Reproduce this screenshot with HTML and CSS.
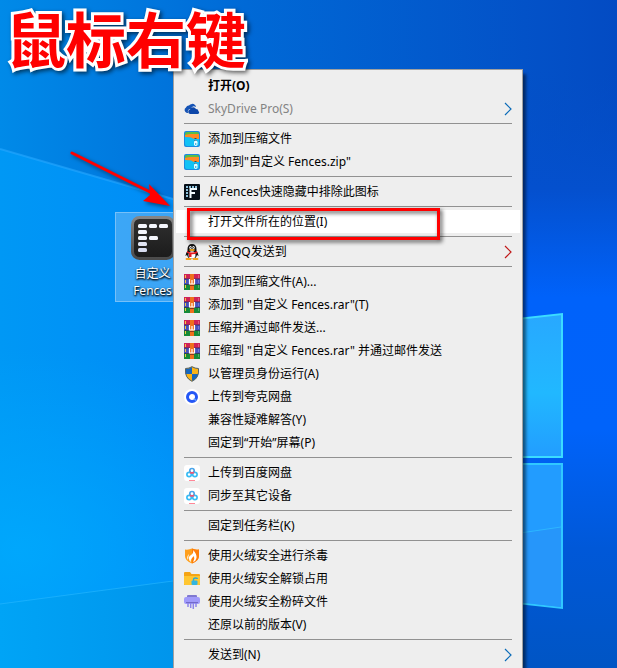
FILE: index.html
```html
<!DOCTYPE html>
<html lang="zh-CN">
<head>
    <meta charset="UTF-8">
    <meta name="viewport" content="width=device-width, initial-scale=1.0">
    <title>鼠标右键</title>
    <link rel="stylesheet" href="styles.css">
</head>
<body>
    <!-- Shared menu icons -->
    <svg class="sprite" aria-hidden="true">
        <symbol id="icon-zip" viewBox="0 0 16 16">
            <rect width="16" height="16" rx="2" fill="#1b8be0"/>
            <path d="M1 5h14v8a2 2 0 0 1-2 2H3a2 2 0 0 1-2-2z" fill="#12c2f5"/>
            <path d="M1 3Q1 1 3 1h10q2 0 2 2v1H1z" fill="#5bbf45"/>
            <path d="M1 4q3-1 6-1h8v5h-4q-2 0-3-1T1 6z" fill="#ff8a24"/>
            <path d="M11.5 7v3" stroke="#20506a" stroke-width="2" stroke-dasharray="1 1"/>
            <rect x="10" y="9.500" width="3.500" height="5.500" rx="1.700" fill="#e9faff"/>
            <circle cx="11.700" cy="13" r=".8" fill="#0794cf"/>
        </symbol>
        <symbol id="icon-rar" viewBox="0 0 16 16">
            <path fill="#cf2257" d="M0 0h16v5H0z"/>
            <path fill="#4650bd" d="M0 5h16v5H0z"/>
            <path fill="#168a38" d="M0 10h16v6H0z"/>
            <path d="M0 5h16M0 10.500h16" stroke="#343060" stroke-width=".8"/>
            <path d="M1.500 1v3m0 2v3m0 2v3" stroke="#f3c941"/>
            <path d="M14.500 1v3m0 2v3m0 2v3" stroke="#fff" opacity=".25"/>
            <path fill="#ef6f1c" d="M6 0h4v16H6z"/>
            <path fill="#8d3a1d" d="M6 11h4v1H6z"/>
            <path d="M5.500 5v5h5V5M8 6v4" fill="none" stroke="#fff" stroke-width="1.200"/>
        </symbol>
        <symbol id="icon-baidu" viewBox="0 0 16 16">
            <rect width="16" height="16" rx="3" fill="#fff"/>
            <circle cx="8" cy="5.700" r="2.200" fill="none" stroke="#4aa5ea" stroke-width="1.700"/>
            <circle cx="5.100" cy="9.500" r="2.200" fill="none" stroke="#39bdf5" stroke-width="1.700"/>
            <circle cx="10.900" cy="9.500" r="2.200" fill="none" stroke="#39bdf5" stroke-width="1.700"/>
            <path d="M6 6.800Q8 9.500 10 6.800M6.500 8.500 8 7.800l1.500.7" fill="none" stroke="#f45472" stroke-width="1.300"/>
            <path d="M5 15.500h6" stroke="#ff8798"/>
        </symbol>
        <symbol id="icon-chevron" viewBox="0 0 8 14">
            <path d="M1 1l6 6-6 6" fill="none" stroke="currentColor" stroke-width="1.2"/>
        </symbol>
    </svg>

    <main class="desktop">
        <svg class="wallpaper" viewBox="0 0 617 668" preserveAspectRatio="none" aria-hidden="true">
            <defs>
                <linearGradient id="sky">
                    <stop offset="0" stop-color="#0098f5"/>
                    <stop offset=".28" stop-color="#008cf7"/>
                    <stop offset=".85" stop-color="#0060e0"/>
                    <stop offset="1" stop-color="#005ae0"/>
                </linearGradient>
                <linearGradient id="topSky">
                    <stop offset="0" stop-color="#008ae8"/>
                    <stop offset=".4" stop-color="#0069d6"/>
                    <stop offset=".85" stop-color="#0352c8"/>
                    <stop offset="1" stop-color="#034bc3"/>
                </linearGradient>
                <linearGradient id="floor">
                    <stop offset="0" stop-color="#00a4f6"/>
                    <stop offset=".28" stop-color="#0095ec"/>
                    <stop offset="1" stop-color="#0050bf"/>
                </linearGradient>
                <linearGradient id="rightSky" x2="0" y2="1">
                    <stop offset="0" stop-color="#034dc6" stop-opacity="0"/>
                    <stop offset=".2" stop-color="#0450ce"/>
                    <stop offset=".38" stop-color="#0062fa"/>
                    <stop offset=".6" stop-color="#0063fa"/>
                    <stop offset=".8" stop-color="#0058d8"/>
                    <stop offset="1" stop-color="#0055c4"/>
                </linearGradient>
                <radialGradient id="glow">
                    <stop offset="0" stop-color="#00aeff" stop-opacity=".7"/>
                    <stop offset="1" stop-color="#00aeff" stop-opacity="0"/>
                </radialGradient>
                <linearGradient id="pane" x2="0" y2="1">
                    <stop offset="0" stop-color="#28a8ff"/>
                    <stop offset=".55" stop-color="#21b8ff"/>
                    <stop offset="1" stop-color="#229dff"/>
                </linearGradient>
            </defs>
            <path fill="url(#sky)" d="M0 0h617v668H0z"/>
            <path fill="url(#topSky)" d="M0 0h617v327L173 199 0 149z"/>
            <ellipse cx="20" cy="550" rx="260" ry="200" fill="url(#glow)"/>
            <path fill="url(#floor)" d="M0 604l617-82v146H0z"/>
            <path fill="url(#rightSky)" d="M500 70h117v598H500z"/>
            <path d="M0 149l173 50" stroke="#28a8ff" stroke-width="2" opacity=".6"/>
            <path d="M0 604l173-23" stroke="#28b8ff" opacity=".6"/>
            <path d="M500 321l62-7v143h-62z" fill="url(#pane)" stroke="#3bdcff" stroke-width="2"/>
            <path d="M500 464h62v144l-62-7z" fill="#229cff" stroke="#30c8ff" stroke-width="2"/>
            <path d="M500 536l61-9v80l-61-7z" fill="#2696fa"/>
            <path d="M500 536l61-9" stroke="#2db6ff"/>
        </svg>

        <h1 class="caption">鼠标右键</h1>

        <button class="shortcut" type="button">
            <svg class="shortcut-icon" viewBox="0 0 44 44" aria-hidden="true">
                <defs>
                    <linearGradient id="tile" x2="0" y2="1">
                        <stop offset="0" stop-color="#303030"/>
                        <stop offset="1" stop-color="#1b1b1b"/>
                    </linearGradient>
                    <linearGradient id="tileEdge" x2="0" y2="1">
                        <stop offset="0" stop-color="#858585"/>
                        <stop offset="1" stop-color="#4b4b4b"/>
                    </linearGradient>
                </defs>
                <rect x="1.5" y="1.5" width="41" height="41" rx="7" fill="url(#tile)" stroke="url(#tileEdge)" stroke-width="3"/>
                <g fill="#f4f6fc">
                    <rect x="7" y="8" width="9" height="4" rx="1.5"/>
                    <rect x="18" y="8" width="8" height="4" rx="1.5"/>
                    <rect x="28" y="8" width="9" height="4" rx="1.5"/>
                    <rect x="7" y="14" width="9" height="4" rx="1.5"/>
                    <rect x="7" y="20" width="9" height="4" rx="1.5"/>
                    <rect x="18" y="20" width="9" height="4" rx="1.5"/>
                    <rect x="7" y="26" width="9" height="4" rx="1.5" fill="#e0e4f2"/>
                    <rect x="7" y="32" width="9" height="4" rx="1.5" fill="#d8ddf0"/>
                </g>
            </svg>
            <span>自定义<br>Fences</span>
        </button>

        <nav class="menu" aria-label="右键菜单">
            <button class="item item-default" type="button"><span class="icon"></span>打开(O)</button>
            <button class="item" type="button" disabled>
                <svg class="icon" viewBox="0 0 16 16"><path d="M3 12a3 3 0 0 1-1-5.5 3 3 0 0 1 3-2A4 4 0 0 1 11 4q1 1 1 2-4-2-5 2-4 0-3 4z" fill="#1553b5"/><path d="M6 13a2.3 2.3 0 0 1 0-4.5A3.3 3.3 0 0 1 12 8a2.5 2.5 0 0 1 2.5 2.3A1.5 1.5 0 0 1 14 13z" fill="#0d47a9"/></svg>
                SkyDrive Pro(S)
                <svg class="chevron"><use href="#icon-chevron"/></svg>
            </button>
            <hr>
            <button class="item" type="button"><svg class="icon"><use href="#icon-zip"/></svg>添加到压缩文件</button>
            <button class="item" type="button"><svg class="icon"><use href="#icon-zip"/></svg>添加到"自定义 Fences.zip"</button>
            <hr>
            <button class="item" type="button">
                <svg class="icon" viewBox="0 0 16 16"><rect width="16" height="16" rx="1" fill="#071018"/><path d="M3 2v12" stroke="#8fc3dc" stroke-width="2" stroke-dasharray="2 1"/><path d="M5 3h9" stroke="#8fc3dc" stroke-width="2" stroke-dasharray="2 1"/><path d="M6.500 14V5H13M6.500 9H11" fill="none" stroke="#f2fbff" stroke-width="2"/></svg>
                从Fences快速隐藏中排除此图标
            </button>
            <hr>
            <button class="item item-active" type="button"><span class="icon"></span>打开文件所在的位置(I)<span class="marker"></span></button>
            <hr>
            <button class="item" type="button">
                <svg class="icon" viewBox="0 0 16 16"><path d="M3.5 7Q3 0 8 0t4.500 7q2 2 2 5l-1.500-1q-1 4-5 4t-5-4l-1.500 1q0-3 2-5z" fill="#111"/><ellipse cx="8" cy="11" rx="3.5" ry="3.8" fill="#fff"/><ellipse cx="6.5" cy="3.5" rx="1.2" ry="1.5" fill="#fff"/><ellipse cx="9.5" cy="3.5" rx="1.2" ry="1.5" fill="#fff"/><path d="M6.700 3v1.200M9.300 3v1.200" stroke="#000" stroke-width=".8"/><ellipse cx="8" cy="6" rx="3" ry="1" fill="#f6a71b"/><path d="M3 7q5 3 10 0l.5 2q-3 1.500-6 1.300V13H5V9.500L3 8.800z" fill="#e5191f"/><path d="M2.500 15h4M9.500 15h4" stroke="#f5a21a" stroke-width="1.8" stroke-linecap="round"/></svg>
                通过QQ发送到
                <svg class="chevron chevron-red"><use href="#icon-chevron"/></svg>
            </button>
            <hr>
            <button class="item" type="button"><svg class="icon"><use href="#icon-rar"/></svg>添加到压缩文件(A)...</button>
            <button class="item" type="button"><svg class="icon"><use href="#icon-rar"/></svg>添加到 "自定义 Fences.rar"(T)</button>
            <button class="item" type="button"><svg class="icon"><use href="#icon-rar"/></svg>压缩并通过邮件发送...</button>
            <button class="item" type="button"><svg class="icon"><use href="#icon-rar"/></svg>压缩到 "自定义 Fences.rar" 并通过邮件发送</button>
            <button class="item" type="button">
                <svg class="icon" viewBox="0 0 16 16"><path d="M8 .5Q11 2.500 14.500 2.500 15.500 12 8 15.500.5 12 1.500 2.500 5 2.500 8 .5z" fill="#fbb416"/><path d="M8 8V1q3 2 6.400 2 .3 2 0 5zM8 8v7Q3 13 1.600 8z" fill="#fbb416"/><path d="M8 1v7H1.600q-.3-3 0-5Q5 3 8 1zM8 8h6.400Q13 13 8 15z" fill="#1767bd"/><path d="M8 .7Q11 2.500 14.500 2.500 15.500 12 8 15.300.5 12 1.500 2.500 5 2.500 8 .7z" fill="none" stroke="#53636b"/></svg>
                以管理员身份运行(A)
            </button>
            <button class="item" type="button">
                <svg class="icon" viewBox="0 0 16 16"><circle cx="8" cy="8" r="8" fill="#fff"/><circle cx="8" cy="8" r="4.500" fill="none" stroke="#2457f5" stroke-width="3"/><path d="M10 9.500l2 2" stroke="#6aa8ff" stroke-width="1.5"/></svg>
                上传到夸克网盘
            </button>
            <button class="item" type="button"><span class="icon"></span>兼容性疑难解答(Y)</button>
            <button class="item" type="button"><span class="icon"></span>固定到“开始”屏幕(P)</button>
            <hr>
            <button class="item" type="button"><svg class="icon"><use href="#icon-baidu"/></svg>上传到百度网盘</button>
            <button class="item" type="button"><svg class="icon"><use href="#icon-baidu"/></svg>同步至其它设备</button>
            <hr>
            <button class="item" type="button"><span class="icon"></span>固定到任务栏(K)</button>
            <hr>
            <button class="item" type="button">
                <svg class="icon" viewBox="0 0 16 16"><path d="M1 1.500Q5 2 8 .5 11 2 15 1.500V8q0 5-7 7.500Q1 13 1 8z" fill="#ff9f1c"/><path d="M8 .5Q11 2 15 1.500V8q0 5-7 7.500z" fill="#ff7d0a"/><path d="M9 2q1 3-2 5t-2 4q0 2 2 3-1-2 1-4l2-2q1 3-1 6 3-1 3.500-4Q13 6 9 2zM5 6q-3 3-1 6 0-3 1-6z" fill="#fff"/></svg>
                使用火绒安全进行杀毒
            </button>
            <button class="item" type="button">
                <svg class="icon" viewBox="0 0 16 16"><path d="M0 2q0-1 1-1h5l1.500 2H15q1 0 1 1v10H0z" fill="#f5a414"/><path d="M0 5h16v8q0 1-1 1H1q-1 0-1-1z" fill="#ffc631"/><path d="M9.500 10V8.500q0-1.500 2-1.500t2 1" fill="none" stroke="#2aa9d8" stroke-width="1.3"/><rect x="7.500" y="9.500" width="6" height="4.500" rx="1" fill="#31b5e0"/></svg>
                使用火绒安全解锁占用
            </button>
            <button class="item" type="button">
                <svg class="icon" viewBox="0 0 16 16"><path d="M3 2q0-1 1-1h8q1 0 1 1v2H3z" fill="#7f78d0"/><rect y="3" width="16" height="7" rx="2" fill="#a09afa"/><path d="M2 8.500h12" stroke="#736ac8"/><path d="M4 9v4m2.700-4v5m2.600-5v6M12 9v4" stroke="#8d85ea" stroke-width="1.5"/></svg>
                使用火绒安全粉碎文件
            </button>
            <button class="item" type="button"><span class="icon"></span>还原以前的版本(V)</button>
            <hr>
            <button class="item" type="button">
                <span class="icon"></span>发送到(N)
                <svg class="chevron"><use href="#icon-chevron"/></svg>
            </button>
        </nav>

        <svg class="arrow" viewBox="0 0 104 60" aria-hidden="true">
            <path d="M4 5l78 39" stroke="#f00" stroke-width="3" stroke-linecap="round"/>
            <path d="M102 58L75 53l7-6-1-11z" fill="#f00"/>
        </svg>
    </main>
</body>
</html>
```
FILE: styles.css
```css
* {
    box-sizing: border-box;
}
body {
    margin: 0;
    font-family: "Noto Sans", "Noto Sans CJK SC", sans-serif;
    font-size: 12px;
    color: #000;
}
.sprite {
    display: none;
}
.desktop {
    position: relative;
    height: 100vh;
    overflow: hidden;
    background: #0088f0;
}
.wallpaper {
    position: absolute;
    width: 100%;
    height: 100%;
}
.caption {
    position: absolute;
    top: 7px;
    left: 6px;
    z-index: 2;
    margin: 0;
    font-family: "Noto Sans CJK SC", sans-serif;
    font-size: 60px;
    font-weight: 700;
    line-height: 60px;
    white-space: nowrap;
    color: #f00;
    -webkit-text-stroke: 6px #fff;
    paint-order: stroke fill;
    filter: drop-shadow(2px 2px 2px rgba(0, 0, 0, 0.6));
}

/* desktop shortcut */
.shortcut {
    position: absolute;
    top: 212px;
    left: 115px;
    display: flex;
    flex-direction: column;
    align-items: center;
    gap: 5px;
    width: 75px;
    padding: 3px 0 2px;
    border: 1px solid #76c0f8;
    background: rgba(120, 190, 245, 0.5);
    font: inherit;
    line-height: 17px;
    color: #fff;
    text-shadow: 1px 1px 2px #000, 0 1px 2px #000;
}
.shortcut-icon {
    width: 44px;
    height: 44px;
}

/* context menu */
.menu {
    position: absolute;
    top: 69px;
    bottom: 0;
    left: 173px;
    width: 350px;
    padding: 4px 2px;
    border: 1px solid #a0a0a0;
    border-bottom: 0;
    background: #eee;
    box-shadow: 3px 5px 3px rgba(0, 0, 0, 0.5);
}
.menu hr {
    height: 1px;
    margin: 3px 8px;
    border: 0;
    background: #919191;
}
.item {
    position: relative;
    display: flex;
    align-items: center;
    gap: 8px;
    width: 100%;
    height: 23px;
    padding: 0 8px;
    border: 0;
    background: none;
    font: inherit;
    line-height: 23px;
    white-space: nowrap;
    text-align: left;
    color: #000;
}
.item:hover,
.item-active {
    background: #fff;
}
.item:disabled {
    color: #838383;
}
.item-default {
    font-weight: 700;
}
.icon {
    flex: none;
    width: 16px;
    height: 16px;
}
.chevron {
    width: 8px;
    height: 14px;
    margin-left: auto;
    color: #0a6bb8;
}
.chevron-red {
    color: #c01818;
}

/* red annotations */
.marker {
    position: absolute;
    top: -2px;
    left: 11px;
    z-index: 1;
    width: 253px;
    height: 32px;
    border: 3px solid #f00;
    filter: drop-shadow(2px 2px 2px rgba(0, 0, 0, 0.7));
}
.arrow {
    position: absolute;
    top: 148px;
    left: 68px;
    width: 104px;
    height: 60px;
    overflow: visible;
    filter: drop-shadow(2px 2px 2px rgba(0, 0, 0, 0.5));
}
```
